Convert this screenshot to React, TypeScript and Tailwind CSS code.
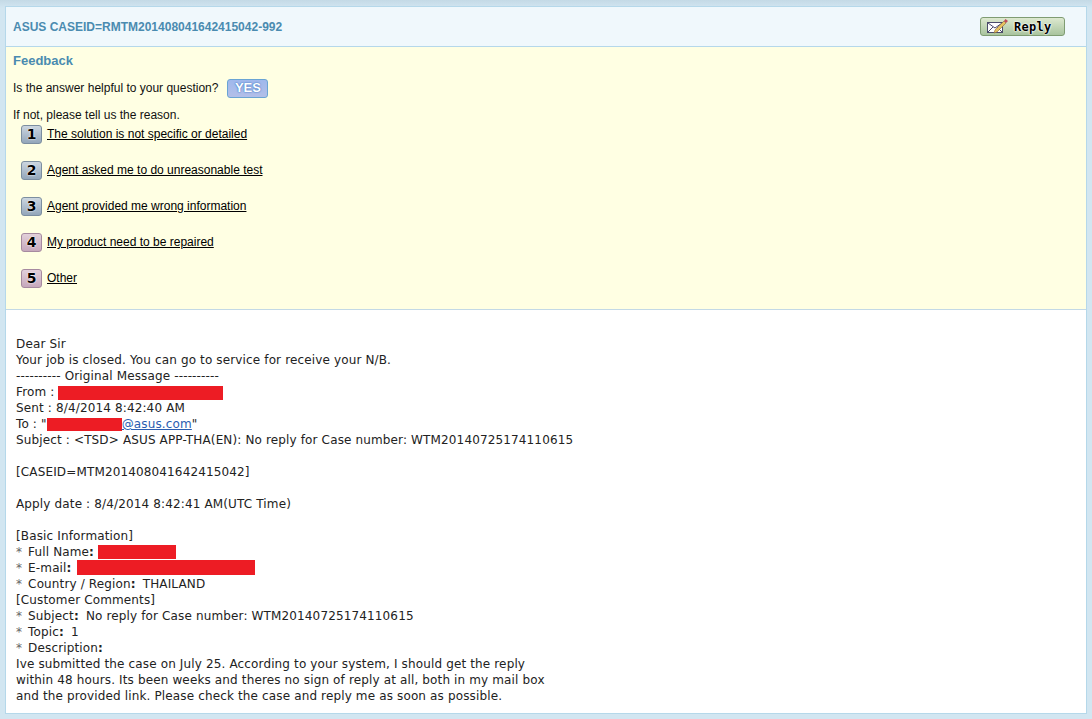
import React from "react";

const reasons = [
  { n: "1", t: "The solution is not specific or detailed", pink: false },
  { n: "2", t: "Agent asked me to do unreasonable test", pink: false },
  { n: "3", t: "Agent provided me wrong information", pink: false },
  { n: "4", t: "My product need to be repaired", pink: true },
  { n: "5", t: "Other", pink: true },
];

function Redact({ c }: { c: string }) {
  return <span className={`inline-block bg-[#ed1c24] ${c}`} />;
}

function Label({ t }: { t: string }) {
  return (
    <>
      <span className="mr-[2px] text-[#666]">*</span> {t}
      <span className="font-bold">:</span>{" "}
    </>
  );
}

export default function App() {
  return (
    <div className="h-[719px] w-[1092px] overflow-hidden bg-[#d2e6f1] bg-[linear-gradient(to_bottom,#c4dae6,#d2e6f1_8px)] px-[5px] pt-[6px] font-['Liberation_Sans',sans-serif]">
      <div className="h-[708px] overflow-hidden border border-[#b5d8ea] bg-white">
        <div className="flex h-[40px] items-center justify-between border-b border-[#b5d8ea] bg-[#f0f8fc] pl-[7px] pr-[21px]">
          <span className="text-[12px] font-bold text-[#4a8bb0]">ASUS CASEID=RMTM201408041642415042-992</span>
          <button className="flex h-[19px] w-[85px] items-center rounded-[3px] border border-[#7f9c72] bg-gradient-to-b from-[#dde9d0] to-[#a9c49e] pl-[6px]">
            <svg width="22" height="15" viewBox="0 0 22 15">
              <rect x="0.5" y="3.5" width="15" height="10" fill="#fff" stroke="#4b4b6b" />
              <path d="M1 4l7 5 7-5M1 13l5-5M15 13l-5-5" fill="none" stroke="#4b4b6b" />
              <path d="M8 11l9-9 2 2-9 9-3 1z" fill="#e6c25f" stroke="#8a6a3a" strokeWidth="0.6" />
              <path d="M17 2l1.5-2 2.5 2-2 2z" fill="#c04a5a" />
            </svg>
            <span className="ml-[5px] font-['DejaVu_Sans_Mono',monospace] text-[12px] font-bold tracking-[0.3px] text-black [text-shadow:0_0_2px_#fff,0_0_2px_#fff,0_0_1px_#fff]">Reply</span>
          </button>
        </div>
        <div className="h-[263px] border-b border-[#c3d9e6] bg-[#ffffe3] pl-[7px] text-[12px] text-[#111]">
          <div className="pt-[6px] text-[13px] leading-[16px] font-bold text-[#4a8bb0]">Feedback</div>
          <div className="mt-[9px] flex h-[20px] items-center">
            <span>Is the answer helpful to your question?</span>
            <span className="ml-[9px] flex h-[19px] w-[41px] items-center justify-center rounded-[3px] border border-[#6aa4d4] bg-gradient-to-b from-[#9fb8ec] to-[#b3bfe8] text-[13px] font-bold text-white [text-shadow:0_0_2px_#3f79c4,0_0_1px_#3f79c4]">YES</span>
          </div>
          <div className="mt-[10px] leading-[14px]">If not, please tell us the reason.</div>
          <div className="ml-[8px] mt-[2px] flex flex-col">
            {reasons.map((r) => (
              <div key={r.n} className="mb-[16px] flex h-[20px] items-center">
                <span
                  className={`flex h-[19px] w-[21px] items-center justify-center rounded-[3px] border font-['DejaVu_Sans',sans-serif] text-[14px] font-bold text-black [text-shadow:0_0_2px_#fff,0_0_1px_#fff] bg-gradient-to-b ${
                    r.pink ? "border-[#a68aa0] from-[#e2d0da] to-[#c6a8bc]" : "border-[#7c8ea0] from-[#ccd6e0] to-[#93a6ba]"
                  }`}
                >
                  {r.n}
                </span>
                <a className="ml-[5px] text-black underline">{r.t}</a>
              </div>
            ))}
          </div>
        </div>
        <div className="pl-[10px] pt-[26px] font-['DejaVu_Sans',sans-serif] text-[12px] leading-[16px] tracking-[0.14px] text-[#222] [&>div]:h-[16px]">
          <div>Dear Sir</div>
          <div>Your job is closed. You can go to service for receive your N/B.</div>
          <div>---------- Original Message ----------</div>
          <div>From : <Redact c="h-[14px] w-[165px] align-[-4px]" /></div>
          <div>Sent : 8/4/2014 8:42:40 AM</div>
          <div>To : "<Redact c="h-[13px] w-[75px] align-[-3px]" /><span className="text-[#2a5db0] underline">@asus.com</span>"</div>
          <div>Subject : &lt;TSD&gt; ASUS APP-THA(EN): No reply for Case number: WTM20140725174110615</div>
          <div />
          <div>[CASEID=MTM201408041642415042]</div>
          <div />
          <div>Apply date : 8/4/2014 8:42:41 AM(UTC Time)</div>
          <div />
          <div>[Basic Information]</div>
          <div><Label t="Full Name" /><Redact c="h-[14px] w-[78px] align-[-3px]" /></div>
          <div><Label t="E-mail" /><Redact c="ml-[1px] h-[15px] w-[178px] align-[-3px]" /></div>
          <div><Label t="Country / Region" /><span className="ml-[3px]">THAILAND</span></div>
          <div>[Customer Comments]</div>
          <div><Label t="Subject" /><span className="ml-[3px]">No reply for Case number: WTM20140725174110615</span></div>
          <div><Label t="Topic" /><span className="ml-[3px]">1</span></div>
          <div><Label t="Description" /></div>
          <div>Ive submitted the case on July 25. According to your system, I should get the reply</div>
          <div>within 48 hours. Its been weeks and theres no sign of reply at all, both in my mail box</div>
          <div>and the provided link. Please check the case and reply me as soon as possible.</div>
        </div>
      </div>
    </div>
  );
}
